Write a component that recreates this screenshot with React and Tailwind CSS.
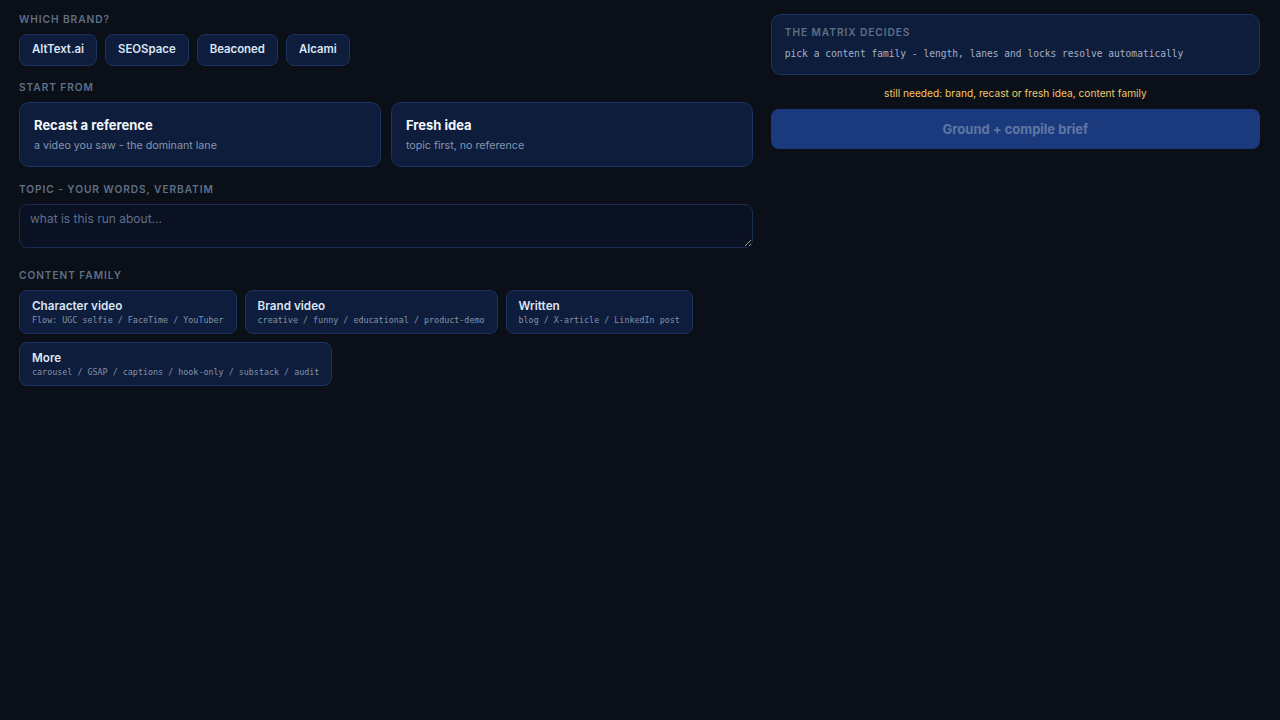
import React from "react";

const label = "text-[10.2px] font-semibold uppercase tracking-[0.09em] text-[#5f6f88] leading-[14px]";

export default function App() {
  const brands = ["AltText.ai", "SEOSpace", "Beaconed", "Alcami"];
  const families = [
    ["Character video", "Flow: UGC selfie / FaceTime / YouTuber"],
    ["Brand video", "creative / funny / educational / product-demo"],
    ["Written", "blog / X-article / LinkedIn post"],
    ["More", "carousel / GSAP / captions / hook-only / substack / audit"],
  ];
  return (
    <div
      className="min-h-[720px] w-full bg-[#0b0f17] pl-[19px] pr-[20px] pt-[12px]"
      style={{ fontFamily: "Inter, 'Noto Sans', sans-serif" }}
    >
      <div className="grid grid-cols-[3fr_2fr] gap-[18px]">
        <div className="flex flex-col">
          <div className={label}>Which brand?</div>
          <div className="mt-[8px] flex gap-2">
            {brands.map((b) => (
              <div
                key={b}
                className="flex h-[32px] items-center rounded-lg border border-[#1c3260] bg-[#0e1d3c] px-3 text-[11.4px] font-semibold text-[#dbe5f3]"
              >
                {b}
              </div>
            ))}
          </div>
          <div className={label + " mt-[14px]"}>Start from</div>
          <div className="mt-[8px] grid grid-cols-2 gap-[10px]">
            {[
              ["Recast a reference", "a video you saw - the dominant lane"],
              ["Fresh idea", "topic first, no reference"],
            ].map(([t, s]) => (
              <div
                key={t}
                className="flex h-[65px] flex-col justify-center rounded-[10px] border border-[#1c3260] bg-[#0e1d3c] px-[14px]"
              >
                <div className="text-[13px] font-bold leading-[17px] text-[#f3f6fb]">{t}</div>
                <div className="mt-[5px] text-[10.7px] leading-[14px] text-[#8796ad]">{s}</div>
              </div>
            ))}
          </div>
          <div className={label + " mt-[15px]"}>Topic - your words, verbatim</div>
          <textarea
            placeholder="what is this run about..."
            className="mt-[8px] h-[44px] w-full resize-y rounded-lg border border-[#1a2c52] bg-[#0a1122] px-[10px] py-[6px] text-[12px] leading-[16px] text-[#dbe5f3] placeholder-[#5f6e8a] outline-none"
            style={{ fontFamily: "Inter, sans-serif" }}
          />
          <div className={label + " mt-[20px]"}>Content family</div>
          <div className="mt-[8px] flex flex-wrap gap-2">
            {families.map(([t, s]) => (
              <div
                key={t}
                className="flex h-[44px] flex-col justify-center rounded-lg border border-[#1c3260] bg-[#0e1d3c] px-3"
              >
                <div className="text-[11.7px] font-semibold leading-[15px] text-[#dbe5f3]">{t}</div>
                <div
                  className="text-[8.4px] leading-[12px] text-[#8392a9]"
                  style={{ fontFamily: "'DejaVu Sans Mono', monospace" }}
                >
                  {s}
                </div>
              </div>
            ))}
          </div>
        </div>
        <div className="flex flex-col">
          <div className="mt-[2px] flex h-[61px] flex-col rounded-[10px] border border-[#1c3260] bg-[#0e1d3c] px-[13px] pt-[10px]">
            <div className={label + " text-[#5b6f92]"}>The matrix decides</div>
            <div
              className="mt-[8px] text-[9.6px] leading-[14px] text-[#a3b1c6]"
              style={{ fontFamily: "'DejaVu Sans Mono', monospace" }}
            >
              pick a content family - length, lanes and locks resolve automatically
            </div>
          </div>
          <div className="mt-[11px] text-center text-[10.2px] leading-[14px] text-[#f2c96d]">
            still needed: brand, recast or fresh idea, content family
          </div>
          <div className="mt-[9px] flex h-[40px] items-center justify-center rounded-lg bg-[#1b3a7e] pt-[1px] text-[13px] font-bold text-[#5f76a3]">
            Ground + compile brief
          </div>
        </div>
      </div>
    </div>
  );
}
